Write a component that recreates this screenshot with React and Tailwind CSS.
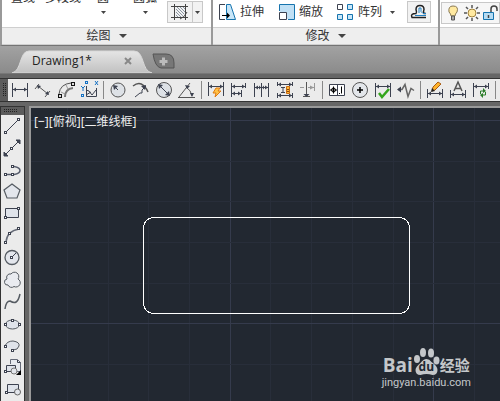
const INK = '#3d4250';

function Icon({ w = 23, h = 20, children }) {
  return (
    <svg width={w} height={h} viewBox={`0 0 ${w} ${h}`} fill="none" stroke={INK} aria-hidden="true">
      {children}
    </svg>
  );
}

function Node({ x, y }) {
  return <rect x={x - 1} y={y - 1} width="2" height="2" fill="#fff" stroke={INK} />;
}

function Caret({ small }) {
  return (
    <svg width={small ? 5 : 8} height={small ? 3 : 4} viewBox="0 0 8 4" preserveAspectRatio="none" fill="#444" aria-hidden="true">
      <path d="M0 0h8L4 4z" />
    </svg>
  );
}

// dimension toolbar, 23x20 per icon
const dimGroups = [
  [
    ['Linear', <><path d="M4.500 3v14M19.500 3v14M5 9.500h14" /><path d="M5 9.500l3-2v4zM19 9.500l-3-2v4z" fill={INK} stroke="none" /></>],
    ['Aligned', <><path d="M7 6l10 8M4 9l4-5M14 17l5-6" stroke="#555" /><path d="M6 5l4 1-3 3zM18 15l-4-1 3-3z" fill={INK} stroke="none" /></>],
    ['Arc length', <><path d="M5 14Q6 4 17 3" stroke="#555" /><path d="M11 17Q11 9 19 8" stroke="#777" strokeWidth="2" /><path d="M7 12l4 2M12 5l2 4" stroke="#999" /><path d="M4 14h4v4H4zM17 2h4v4h-4z" fill="#111" stroke="none" /><path d="M5 15h2v2H5zM18 3h2v2h-2z" fill="#ddd" stroke="none" /></>],
    ['Ordinate', <><path d="M9.500 6v10.500h10V8M9 10l3 1 3 4 4-5M9 15l5-3" /><path d="M18 1l3 4M21 1l-3 4M4 6l2 2 2-2M6 8v3" stroke="#1672c4" /><rect x="8.500" y="1.500" width="2" height="2" stroke="#1672c4" /><rect x="4.500" y="14.500" width="2" height="2" stroke="#1672c4" /></>],
  ],
  [
    ['Radius', <><circle cx="12" cy="10" r="7" fill="#dde1e6" stroke="#555" /><path d="M12 10L8 6" /><path d="M7 5l5 1-4 4z" fill={INK} stroke="none" /></>],
    ['Jogged', <><path d="M4 6Q13-1 19 12" stroke="#555" strokeWidth="1.500" /><path d="M6 17l5-4h2v-3l4-4" /><path d="M17 5l-5 1 4 4z" fill={INK} stroke="none" /></>],
    ['Diameter', <><circle cx="12" cy="10" r="7.500" fill="#dde1e6" stroke="#555" /><path d="M8 6l8 8" /><path d="M6 4l5 1-4 4zM18 16l-5-1 4-4z" fill={INK} stroke="none" /></>],
    ['Angular', <><path d="M3 17.500h17M4 17L15 3M11 7q5 3 6 9" stroke="#555" /><path d="M10 5l5 1-3 3zM17 17l-2-4h4z" fill={INK} stroke="none" /></>],
  ],
  [
    ['Quick dimension', <><path d="M4.500 2v14M19.500 2v14M5 6.500h14" /><path d="M5 6.500l3-2v4zM19 6.500l-3-2v4z" fill={INK} stroke="none" /><path d="M12 8h4l-2 3h3l-6 6 1-4H9z" fill="#ffc247" stroke="#e07a10" /></>],
    ['Baseline', <><path d="M4.500 3v14M18.500 3v5M14.500 10v7M5 6.500h13M5 13.500h9" /><path d="M5 6.500l3-2v4zM18 6.500l-3-2v4zM5 13.500l3-2v4zM14 13.500l-3-2v4z" fill={INK} stroke="none" /></>],
    ['Continue', <><path d="M4.500 3v14M11.500 3v14M18.500 3v14M5 7.500h13" /><path d="M5 7.500l3-2v4zM11 7.500l-2-2v4zM12 7.500l2-2v4zM18 7.500l-3-2v4z" fill={INK} stroke="none" /></>],
    ['Dimension space', <><path d="M4.500 2v4M19.500 2v4M4 4.500h16M4 15.500h16M4.500 13v5M19.500 13v5M8 7.500h4M10 8v5M8 12.500h4" /><path d="M5 4.500l3-2v4zM19 4.500l-3-2v4zM5 15.500l3-2v4zM19 15.500l-3-2v4z" fill={INK} stroke="none" /><path d="M13.500 6.500h3v7h-3z" fill="#ffba3c" stroke="#c86b11" /><path d="M14 9.500h2M14 11.500h2" stroke="#8a4a0a" /></>],
    ['Dimension break', <><path d="M18.500 3v8M4 7.500h4M12 7.500h6" stroke="#999" /><path d="M10.500 2v15M7 16.500h7" stroke="#555" /><path d="M10.500 17l-3-3h6z" fill={INK} stroke="none" /><path d="M18 7.500l-4-2v4z" fill="#999" stroke="none" /></>],
  ],
  [
    ['Tolerance', <><path d="M4.500 4.500h15v11h-15zM12.500 5v10" fill="#fff" /><circle cx="8.500" cy="10" r="2" stroke="#000" /><path d="M8.500 6.500v7M5 10h7M16.500 6.500v7M14 13.500h1" stroke="#000" /></>],
    ['Center mark', <><circle cx="12" cy="10" r="7.500" fill="#e3e6ea" stroke="#555" /><path d="M12 7v6M9 10h6" stroke="#000" strokeWidth="1.500" /></>],
    ['Inspection', <><path d="M4.500 3v14M19.500 3v14M5 6.500h14" /><path d="M5 6.500l3-2v4zM19 6.500l-3-2v4z" fill={INK} stroke="none" /><path d="M8 13l3 4 7-8" stroke="#34a51c" strokeWidth="2.500" /></>],
    ['Jogged linear', <><path d="M4 9.500h4l3-5 3 12 3-8 3 2" stroke="#666" strokeWidth="1.500" /><path d="M3 9.500l4-3v6z" fill={INK} stroke="none" /></>],
  ],
  [
    ['Edit', <><path d="M4.500 9v9M19.500 9v9M5 13.500h14" /><path d="M5 13.500l3-2v4zM19 13.500l-3-2v4z" fill={INK} stroke="none" /><path d="M9 11l1-4 5-5 3 2-6 6z" fill="#ffb32c" stroke="#a85b14" /><path d="M8 12l1-4 3 3z" fill="#222" stroke="none" /></>],
    ['Text edit', <><path d="M4.500 10v8M19.500 10v8M5 14.500h14" /><path d="M5 14.500l3-2v4zM19 14.500l-3-2v4z" fill={INK} stroke="none" /><path d="M8 11l4-9 4 9M9.500 8.500h5" stroke="#555" strokeWidth="1.500" /></>],
    ['Update', <><path d="M4.500 3v14M19.500 3v6M5 6.500h14" /><path d="M5 6.500l3-2v4zM19 6.500l-3-2v4z" fill={INK} stroke="none" /><path d="M11.500 14v-3h3M16.500 12v3h-3" stroke="#2b7d28" /><path d="M14 8l3 3-3 2zM14 13l-3 2 3 3z" fill="#2b7d28" stroke="none" /></>],
  ],
];

// draw palette, 22x22 per icon
const drawTools = [
  ['Line', <><path d="M5 17L18 4" /><Node x={4.5} y={17.5} /><Node x={17.5} y={4.5} /></>],
  ['Construction line', <><path d="M5 17L17 5" /><path d="M3 19v-4l4 4zM19 3h-4l4 4z" fill={INK} /><Node x={10.5} y={11.5} /></>],
  ['Polyline', <><path d="M5 15.500h7M12 7.500h1q6 1 6 4t-6 4h-1" stroke="#555b6b" strokeWidth="1.500" /><Node x={4.5} y={15.5} /><Node x={11.5} y={15.5} /><Node x={11.5} y={7.5} /></>],
  ['Polygon', <path d="M11 3l8 6-3 8H6L3 9z" fill="#e3e6ec" stroke="#555b62" strokeWidth="1.200" />],
  ['Rectangle', <><path d="M4.500 5.500h13v9h-13z" fill="#dfe3ea" /><Node x={4.5} y={14.5} /><Node x={17.5} y={5.5} /></>],
  ['Arc', <><path d="M5 17Q6 6 18 4" stroke="#666b78" strokeWidth="1.500" /><Node x={4.5} y={17.5} /><Node x={8.5} y={8.5} /><Node x={17.5} y={3.5} /></>],
  ['Circle', <><circle cx="11" cy="10.500" r="7" fill="#e3e6ec" stroke="#555b62" strokeWidth="1.300" /><path d="M11 10l4-4" /><Node x={10.5} y={10.5} /></>],
  ['Revision cloud', <path d="M10 5a3.500 3.500 0 1 1 7 5a3.500 3.500 0 1 1-4 7.500a3.800 3.800 0 0 1-6-1.500a3 3 0 0 1-1-6a3.500 3.500 0 0 1 4-5z" fill="#e9ebf0" stroke="#555b62" />],
  ['Spline', <path d="M4 18q1-8 5-8c5 3 8 2 10-7" stroke="#555b62" strokeWidth="1.500" />],
  ['Ellipse', <><ellipse cx="11.500" cy="11.500" rx="7" ry="4.500" fill="#dfe3ea" stroke="#555b62" /><Node x={4.5} y={11.5} /><Node x={18.5} y={11.5} /><Node x={11.5} y={7.5} /></>],
  ['Ellipse arc', <><path d="M4 11q2-5 8-5 7 1 6 5-1 4-6 4" stroke="#555b62" fill="#dfe3ea" /><Node x={4.5} y={11.5} /><Node x={11.5} y={15.5} /></>],
  ['Insert block', <><path d="M9.500 7V2.500h7l3 3v9h-4" fill="#e8ebf0" stroke="#666b78" /><path d="M16.500 3v2.500h3" /><path d="M5.500 8.500h9v6h-9z" fill="#dfe3ea" /><circle cx="13" cy="14" r="3" fill="#e3e6ec" stroke="#777" /><Node x={4.5} y={14.5} /><path d="M20 13v5h-5z" fill="#000" stroke="none" /></>],
  ['Make block', <><path d="M6.500 5.500h11v8h-11z" fill="#dfe3ea" /><circle cx="16.500" cy="13" r="3" fill="#e3e6ec" stroke="#666" /><Node x={5.5} y={13.5} /></>],
];

function RibbonPanel({ className, title, children }) {
  return (
    <section className={`flex flex-col bg-white ${className}`}>
      <div className="flex h-[27px] overflow-hidden">{children}</div>
      <button type="button" className="flex h-[18px] items-center justify-center gap-2 border-y border-y-[#cfcfcf] bg-[#eeeeee]">
        {title && <>{title}<Caret /></>}
      </button>
    </section>
  );
}

function TopTool({ label, caret, className }) {
  return (
    <button type="button" className={`-mt-[10px] flex flex-col items-center self-start leading-4 ${className}`}>
      {label}
      <span className="flex h-[8px] items-end">{caret && <Caret small />}</span>
    </button>
  );
}

function ModifyTool({ label, children }) {
  return (
    <button type="button" className="flex h-6 shrink-0 items-center gap-1">
      <svg width="17" height="18" viewBox="0 0 17 18" fill="none" stroke={INK} aria-hidden="true">{children}</svg>
      {label}
    </button>
  );
}

function Ribbon() {
  return (
    <header className="flex gap-[2px] overflow-hidden border-b border-l-2 border-b-[#747474] border-l-[#999] bg-[#999] text-[12px] text-[#333]">
      <RibbonPanel className="w-[209px] shrink-0" title="绘图">
        <TopTool label="直线" className="ml-[9px]" />
        <TopTool label="多段线" className="ml-[10px]" />
        <TopTool label="圆" caret className="ml-4" />
        <TopTool label="圆弧" caret className="ml-6" />
        <button type="button" aria-label="Hatch" className="mt-px ml-[10px] flex h-[22px] w-9 items-center border border-[#c8c8c8] bg-[#f2f2f2]">
          <svg width="24" height="20" viewBox="0 0 24 20" fill="none" stroke="#444" aria-hidden="true">
            <path d="M6.500 2v16M17.500 2v16M3 4.500h17M3 15.500h17" />
            <path d="M8 13l2 2M8 10l5 5M8 7l7 7M9 5l8 8M12 5l5 5M15 5l2 2" stroke="#8b96a3" />
            <path d="M19 10l-8 7 8 1z" fill="#f2f2f2" stroke="none" />
            <path d="M19 10q-2 5-7 7M17.500 10v8M12 15.500h8" />
          </svg>
          <span className="flex h-full flex-1 items-center justify-center border-l border-[#c8c8c8]"><Caret small /></span>
        </button>
      </RibbonPanel>
      <RibbonPanel className="w-[225px] shrink-0" title="修改">
        <div className="flex gap-[14px] pl-[6px]">
          <ModifyTool label="拉伸">
            <path d="M6 1.500H.5v15H6" />
            <path d="M7.500 1.500h4l5 15h-9z" fill="#c8e6f8" stroke="#1674ae" />
            <path d="M3 12.500h6" stroke="#000" /><path d="M11 12.500l-3-3v6z" fill="#000" stroke="none" />
          </ModifyTool>
          <ModifyTool label="缩放">
            <path d="M1.500 8V1.500h15v15H10" fill="#c0e0f5" stroke="#1674ae" />
            <path d="M1.500 9.500h7v7h-7z" fill="#fff" />
          </ModifyTool>
          <ModifyTool label="阵列">
            <path d="M.5 1.500h5v5h-5z" />
            <path d="M10.500 1.500h5v5h-5zM.5 11.500h5v5h-5zM10.500 11.500h5v5h-5z" fill="#c8e6f8" stroke="#1674ae" />
          </ModifyTool>
        </div>
        <button type="button" aria-label="Array options" className="flex h-6 w-5 items-center justify-center"><Caret small /></button>
        <button type="button" aria-label="Offset" className="mt-px ml-[5px] h-[22px] w-6 shrink-0 border border-[#c8c8c8] bg-[#f2f2f2]">
          <svg width="22" height="20" viewBox="0 0 22 20" fill="none" aria-hidden="true">
            <path d="M18 15.500H4q-2-4 4-4 1-1 0-4 0-4 4-4t4 4q-1 2 0 4h2" stroke="#222" strokeWidth="1.500" />
            <path d="M18 13.500H7M18 11.500h-3l-2-2V6h-2v5" stroke="#2381c2" />
          </svg>
        </button>
      </RibbonPanel>
      <RibbonPanel className="min-w-0 flex-1">
        <div className="mt-[2px] ml-px flex h-[22px] min-w-0 flex-1 overflow-hidden border border-[#c8c8c8] bg-[#f6f6f6]">
          <svg className="shrink-0" width="58" height="20" viewBox="0 0 58 20" fill="none" aria-hidden="true">
            <path d="M9 13q0-2-2-4-1-6 4-6 6 0 4 6-2 2-2 4z" fill="#ffe9a0" stroke="#8a7952" />
            <path d="M9.500 13h3v4h-3z" fill="#aaa" stroke="#555" />
            <circle cx="30" cy="10" r="4" fill="#ffe9a0" stroke="#a0813b" />
            <path d="M30 2v3M30 15v3M22 10h3M35 10h3M24 4l2 2M34 14l2 2M36 4l-2 2M26 14l-2 2" stroke="#555" strokeWidth="1.500" />
            <path d="M41.500 9.500h10v7h-10z" fill="#b7dcf3" stroke="#1674ae" />
            <path d="M49 9V6q0-3 3-3t3 3v2M46.500 12v3" stroke="#444" strokeWidth="1.500" />
          </svg>
        </div>
      </RibbonPanel>
    </header>
  );
}

function FileTabs() {
  return (
    <nav className="flex h-7 items-end border-b border-[#777] bg-linear-to-b from-[#a2a2a2] to-[#8b8b8b]">
      <div className="relative flex h-[23px] w-[152px] items-center pr-5 pb-px pl-8">
        <svg className="absolute inset-0 h-full w-full" viewBox="0 0 152 23" preserveAspectRatio="none" aria-hidden="true">
          <defs>
            <linearGradient id="tab" x2="0" y2="1"><stop stopColor="#e5e5e5" /><stop offset="1" stopColor="#c1c1c1" /></linearGradient>
          </defs>
          <path d="M12 23C22 21 19 1 29 1H134C145 1 141 21 152 23z" fill="url(#tab)" stroke="#d8d8d8" />
        </svg>
        <button type="button" className="relative font-['Open_Sans',sans-serif] text-[12px] leading-5 text-[#222]">Drawing1*</button>
        <button type="button" aria-label="Close tab" className="relative ml-auto">
          <svg width="8" height="8" viewBox="0 0 8 8" stroke="#888" strokeWidth="2" aria-hidden="true"><path d="M1 1l6 6M7 1L1 7" /></svg>
        </button>
      </div>
      <button type="button" aria-label="New tab" className="mb-[3px]">
        <svg width="24" height="18" viewBox="0 0 24 18" fill="none" aria-hidden="true">
          <path d="M1 2h13q8 0 8 9v5H9Q3 15 1 2z" fill="#777" stroke="#555" />
          <path d="M11.500 5.500v8M7.500 9.500h8" stroke="#bbb" strokeWidth="3" />
        </svg>
      </button>
    </nav>
  );
}

function DimensionBar() {
  return (
    <div role="toolbar" aria-label="Dimension" className="flex h-6 overflow-hidden border-y border-[#333] bg-[#ebebeb]">
      <div className="w-2 shrink-0 bg-[#5c5c5c] pt-1">
        <svg width="8" height="14" viewBox="0 0 8 14" fill="none" stroke="#222" aria-hidden="true">
          <path d="M3.500 0v14M5.500 0v14" strokeDasharray="1 1" />
        </svg>
      </div>
      {dimGroups.map((group, i) => (
        <div key={i} className="flex shrink-0 items-center">
          {group.map(([name, shape]) => (
            <button key={name} type="button" aria-label={name}><Icon>{shape}</Icon></button>
          ))}
          <div className="flex w-[6px] justify-center"><span className="h-[18px] w-px bg-[#888]" /></div>
        </div>
      ))}
    </div>
  );
}

function DrawPalette() {
  return (
    <div role="toolbar" aria-label="Draw" className="flex w-[25px] shrink-0 flex-col border-x border-t border-[#333] bg-[#ebebeb]">
      <div className="flex h-2 items-center bg-[#5c5c5c] pl-[3px]">
        <svg width="14" height="4" viewBox="0 0 14 4" stroke="#222" aria-hidden="true">
          <path d="M0 .5h14M0 2.500h14" strokeDasharray="1 1" />
        </svg>
      </div>
      {drawTools.map(([name, shape]) => (
        <button key={name} type="button" aria-label={name} className="h-[22px] shrink-0"><Icon w={22} h={22}>{shape}</Icon></button>
      ))}
    </div>
  );
}

function Watermark() {
  return (
    <div className="absolute right-[29px] bottom-[10px] text-[#c4c7ca]">
      <div className="flex h-[28px] items-end justify-center">
        <span className="font-['Open_Sans',sans-serif] text-[19px] leading-[20px] font-bold">Bai</span>
        <span className="relative">
          <svg width="27" height="28" viewBox="0 0 27 28" fill="currentColor" aria-hidden="true">
            <ellipse cx="4" cy="12" rx="3" ry="4" />
            <ellipse cx="10" cy="5.500" rx="3" ry="4.500" />
            <ellipse cx="18" cy="6" rx="3" ry="4.500" />
            <ellipse cx="23.500" cy="13.500" rx="3" ry="4" />
            <path d="M13.500 12q3 0 5 3 6 4 6 8 0 5-5 5-3-1-6-1t-6 1q-5 0-5-5 0-3 5-7 3-4 6-4z" />
          </svg>
          <span className="absolute inset-x-0 bottom-0 text-center font-['Open_Sans',sans-serif] text-[12px] leading-4 font-bold text-[#222831]">du</span>
        </span>
        <span className="text-[15px] leading-[18px] font-bold">经验</span>
      </div>
      <a href="#jingyan" className="block text-center font-['Roboto',sans-serif] text-[11px] leading-4">jingyan.baidu.com</a>
    </div>
  );
}

const gridX = [36, 77, 117, 158, 199, 239, 280, 321, 362, 402, 443];
const gridY = [12, 53, 93, 134, 175, 215, 256];
const majorX = [199, 402];
const majorY = [12, 215];

function Canvas() {
  return (
    <main className="relative min-w-0 flex-1 overflow-hidden border-t-2 border-l-2 border-[#999] bg-[#222831]">
      <svg className="absolute inset-0 h-full w-full" fill="none" shapeRendering="crispEdges" aria-hidden="true">
        {gridX.map((x) => (
          <rect key={x} x={x} width="1" height="100%" fill={majorX.includes(x) ? '#353b4c' : '#282e3a'} />
        ))}
        {gridY.map((y) => (
          <rect key={y} y={y} width="100%" height="1" fill={majorY.includes(y) ? '#353b4c' : '#282e3a'} />
        ))}
        <rect x="112.500" y="109.500" width="266" height="96" rx="10" stroke="#fff" />
      </svg>
      <p className="relative px-[3px] pt-[6px] font-['Noto_Sans','Noto_Sans_CJK_SC',sans-serif] text-[12px] leading-4 text-[#eee]">[−][俯视][二维线框]</p>
      <Watermark />
    </main>
  );
}

export default function App() {
  return (
    <div className="flex min-h-screen flex-col overflow-hidden bg-[#666] font-['Liberation_Sans','Noto_Sans_CJK_SC',sans-serif]">
      <Ribbon />
      <FileTabs />
      <div className="pt-1 pb-1"><DimensionBar /></div>
      <div className="flex flex-1 gap-1">
        <DrawPalette />
        <Canvas />
      </div>
    </div>
  );
}
